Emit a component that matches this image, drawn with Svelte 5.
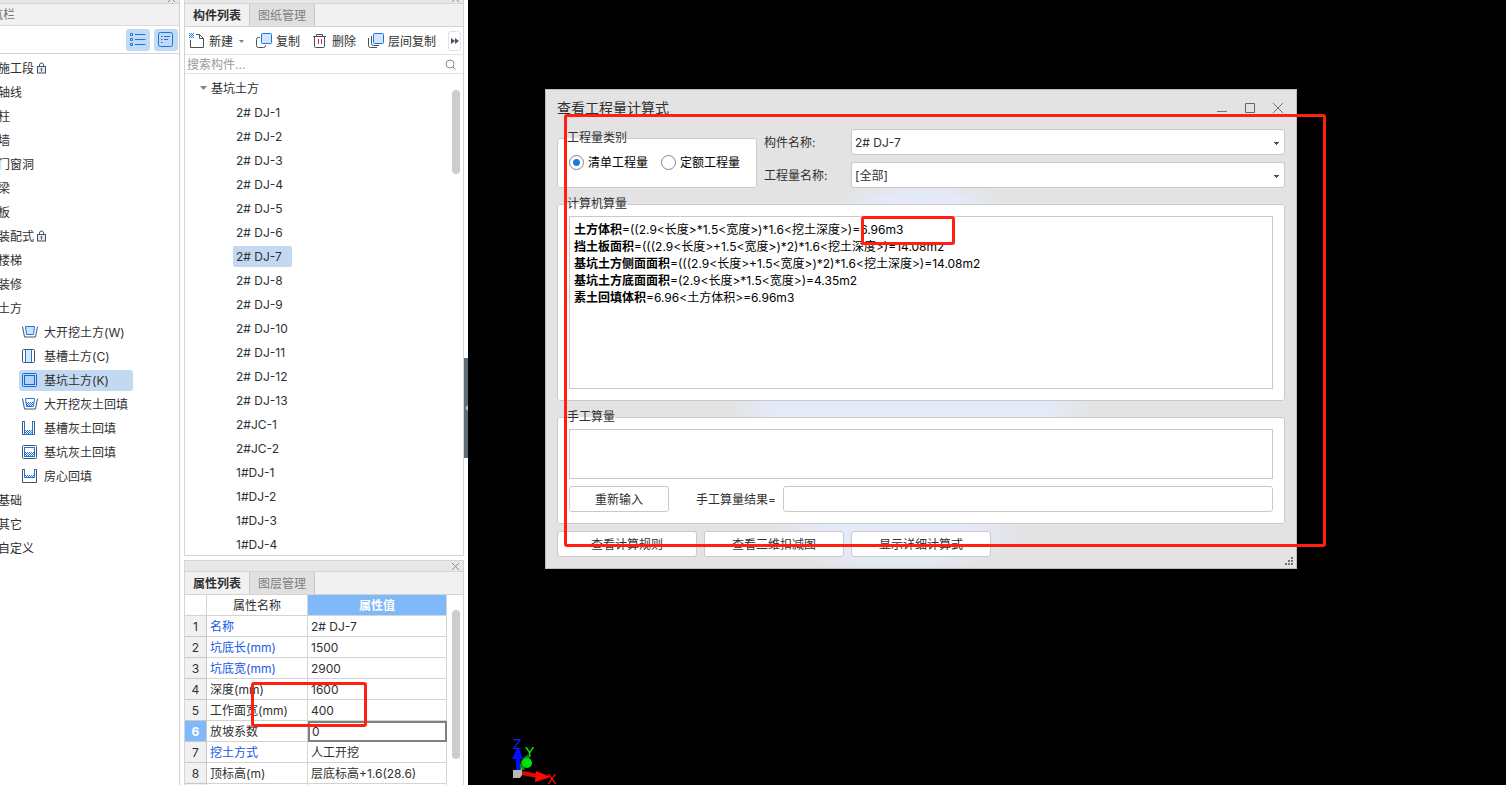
<script lang="ts">
	type NavItem = { label: string; locked?: boolean };

	const navTop: NavItem[] = [
		{ label: '施工段', locked: true },
		{ label: '轴线' },
		{ label: '柱' },
		{ label: '墙' },
		{ label: '门窗洞' },
		{ label: '梁' },
		{ label: '板' },
		{ label: '装配式', locked: true },
		{ label: '楼梯' },
		{ label: '装修' },
		{ label: '土方' }
	];
	const navBottom: NavItem[] = [{ label: '基础' }, { label: '其它' }, { label: '自定义' }];

	const earthwork = [
		{ icon: 'open', label: '大开挖土方(W)' },
		{ icon: 'trench', label: '基槽土方(C)' },
		{ icon: 'pit', label: '基坑土方(K)' },
		{ icon: 'openFill', label: '大开挖灰土回填' },
		{ icon: 'trenchFill', label: '基槽灰土回填' },
		{ icon: 'pitFill', label: '基坑灰土回填' },
		{ icon: 'room', label: '房心回填' }
	];

	const components = [
		...Array.from({ length: 13 }, (_, i) => `2# DJ-${i + 1}`),
		'2#JC-1',
		'2#JC-2',
		...Array.from({ length: 4 }, (_, i) => `1#DJ-${i + 1}`)
	];

	const properties = [
		{ name: '名称', value: '2# DJ-7', key: true },
		{ name: '坑底长(mm)', value: '1500', key: true },
		{ name: '坑底宽(mm)', value: '2900', key: true },
		{ name: '深度(mm)', value: '1600' },
		{ name: '工作面宽(mm)', value: '400' },
		{ name: '放坡系数', value: '0' },
		{ name: '挖土方式', value: '人工开挖', key: true },
		{ name: '顶标高(m)', value: '层底标高+1.6(28.6)' }
	];

	const formulas = [
		{ name: '土方体积', expr: '=((2.9<长度>*1.5<宽度>)*1.6<挖土深度>)=6.96m3' },
		{ name: '挡土板面积', expr: '=(((2.9<长度>+1.5<宽度>)*2)*1.6<挖土深度>)=14.08m2' },
		{ name: '基坑土方侧面面积', expr: '=(((2.9<长度>+1.5<宽度>)*2)*1.6<挖土深度>)=14.08m2' },
		{ name: '基坑土方底面面积', expr: '=(2.9<长度>*1.5<宽度>)=4.35m2' },
		{ name: '素土回填体积', expr: '=6.96<土方体积>=6.96m3' }
	];

	let activeNav = $state('基坑土方(K)');
	let activeComponent = $state('2# DJ-7');
	let activeRow = $state(5);
	let category = $state('bill');
</script>

{#snippet closeMark()}
	<svg width="9" height="9" viewBox="0 0 9 9" fill="none" stroke="#8c8c8c" aria-hidden="true">
		<path d="M1 1l7 7M8 1l-7 7" />
	</svg>
{/snippet}

{#snippet navRow(item: NavItem)}
	<li>
		<button class="nav-row">
			{item.label}
			{#if item.locked}
				<svg width="11" height="12" viewBox="0 0 11 12" fill="none" stroke="#4a5064" aria-hidden="true">
					<rect x="1.5" y="4.5" width="8" height="6.5" fill="#e3e8f2" />
					<path d="M3.5 4.5V3q0-2 2-2t2 2v1.500M5.500 7.500v2" />
					<circle cx="5.500" cy="7" r=".6" />
				</svg>
			{/if}
		</button>
	</li>
{/snippet}

{#snippet earthIcon(name: string)}
	<svg width="16" height="16" viewBox="0 0 16 16" fill="none" aria-hidden="true">
		{#if name === 'open' || name === 'openFill'}
			<path d="M.5 2.500l2 10.500h11l2-10.500" stroke="#4a5064" />
			<path d="M3.500 2.500h9l-1 8h-7z" stroke="#1a73e8" fill={name === 'open' ? '#cfe2fb' : '#fff'} />
		{:else if name === 'trench'}
			<path d="M4 1h5v14H4z" fill="#dbe9fc" />
			<rect x=".5" y="1.500" width="12" height="13" rx="1" stroke="#4a5064" />
			<path d="M3.500 1v14M9.500 1v14" stroke="#1a73e8" />
		{:else if name === 'trenchFill'}
			<path d="M3 1.500H.5v13H3M10 1.500h2.500v13H10" stroke="#4a5064" />
			<path d="M2.500 1v13.500h8V1" stroke="#1a73e8" />
		{:else if name === 'pit'}
			<rect x=".5" y="1.500" width="14" height="13" rx="1" stroke="#1268dc" />
			<rect x="2.500" y="3.500" width="10" height="9" stroke="#1268dc" fill="#b4d3f6" />
		{:else if name === 'pitFill'}
			<rect x=".5" y="1.500" width="14" height="13" rx="1" stroke="#4a5064" />
			<rect x="2.500" y="3.500" width="10" height="9" stroke="#1a73e8" />
		{:else}
			<path d="M2.500 1.500h-2v13h14v-13h-2" stroke="#4a5064" />
			<path d="M2.500 1v8.500h10V1" stroke="#1a73e8" />
		{/if}
		{#if name === 'openFill'}
			<path d="M4 6.500h8M4 8.500h8" stroke="#1a73e8" stroke-dasharray="1 1" />
			<path d="M5 7.500h7M5 9.500h6" stroke="#1a73e8" stroke-dasharray="1 1" />
		{:else if name === 'trenchFill'}
			<path d="M3 10.500h7M3 12.500h7" stroke="#1a73e8" stroke-dasharray="1 1" />
			<path d="M4 11.500h6M4 13.500h6" stroke="#1a73e8" stroke-dasharray="1 1" />
		{:else if name === 'pitFill'}
			<path d="M3 8.500h9M3 10.500h9" stroke="#1a73e8" stroke-dasharray="1 1" />
			<path d="M4 9.500h8M4 11.500h8" stroke="#1a73e8" stroke-dasharray="1 1" />
		{:else if name === 'room'}
			<path d="M3 7.500h9" stroke="#1a73e8" stroke-dasharray="1 1" />
			<path d="M4 8.500h8" stroke="#1a73e8" stroke-dasharray="1 1" />
		{/if}
	</svg>
{/snippet}

<div class="workspace">
	<nav class="nav-panel">
		<div class="strip clipped">{@render closeMark()}</div>
		<div class="nav-title">航栏</div>
		<div class="nav-tools">
			<button aria-label="列表">
				<svg width="16" height="16" viewBox="0 0 16 16" fill="none" stroke="#1a73e8" aria-hidden="true">
					<path d="M5 2.500h10.500M5 7.500h10.500M5 12.500h10.500" />
					<path d="M.5 1.500h2v2h-2zM.5 6.500h2v2h-2zM.5 11.500h2v2h-2z" />
				</svg>
			</button>
			<button aria-label="详情">
				<svg width="16" height="16" viewBox="0 0 16 16" fill="none" stroke="#1a73e8" aria-hidden="true">
					<rect x=".5" y=".5" width="14" height="14" rx="2" />
					<path d="M3 4.500h1.500M6 4.500h6M3 7.500h1.500M6 7.500h4M3 10.500h1.500" />
				</svg>
			</button>
		</div>
		<ul class="nav-list">
			{#each navTop as item}
				{@render navRow(item)}
			{/each}
			<li>
				<ul class="sub-list">
					{#each earthwork as item}
						<li>
							<button
								class="sub-row"
								class:selected={activeNav === item.label}
								onclick={() => (activeNav = item.label)}
							>
								{@render earthIcon(item.icon)}
								{item.label}
							</button>
						</li>
					{/each}
				</ul>
			</li>
			{#each navBottom as item}
				{@render navRow(item)}
			{/each}
		</ul>
	</nav>

	<div class="side">
		<section class="panel">
			<div class="strip clipped">{@render closeMark()}</div>
			<div class="tabs">
				<button class="active">构件列表</button>
				<button>图纸管理</button>
			</div>
			<div class="toolbar">
				<button>
					<svg width="16" height="16" viewBox="0 0 16 16" fill="none" aria-hidden="true">
						<path d="M1.500 7v7.500h13V5.500l-4-4H7M10.500 1.500v4h4" stroke="#4a5064" />
						<path d="M0 .5h5M0 2.500h5M0 4.500h5" stroke="#1a73e8" stroke-dasharray="1 1" />
						<path d="M1 1.500h4M1 3.500h4" stroke="#1a73e8" stroke-dasharray="1 1" />
					</svg>
					新建
					<svg class="drop" width="5" height="3" viewBox="0 0 5 3" aria-hidden="true"><path d="M0 0h5L2.500 3z" fill="#808080" /></svg>
				</button>
				<button>
					<svg width="16" height="16" viewBox="0 0 16 16" fill="none" aria-hidden="true">
						<path d="M4 4.500H2.500q-2 0-2 2v6q0 2 2 2h5q2 0 2-2V12" stroke="#4a5064" />
						<rect x="5.500" y=".5" width="10" height="10" rx="1" stroke="#1a73e8" fill="#d5e5fb" />
					</svg>
					复制
				</button>
				<button>
					<svg width="16" height="16" viewBox="0 0 16 16" fill="none" aria-hidden="true">
						<path d="M1 3.500h13M4.500 3.500v-2h6v2M2.500 3.500v10q0 1 1 1h8q1 0 1-1v-10" stroke="#4a5064" />
						<path d="M6.500 6v5M9.500 6v5" stroke="#e0202b" />
					</svg>
					删除
				</button>
				<button>
					<svg width="16" height="16" viewBox="0 0 16 16" fill="none" aria-hidden="true">
						<path d="M.5 5v7.500q0 2 2 2H9M3.500 3v7.500q0 2 2 2H11" stroke="#4a5064" />
						<rect x="5.500" y=".5" width="10" height="10" rx="1" stroke="#1a73e8" fill="#d5e5fb" />
					</svg>
					层间复制
				</button>
				<button class="more" aria-label="更多">
					<svg width="8" height="6" viewBox="0 0 8 6" aria-hidden="true"><path d="M0 0l4 3-4 3zM4 0l4 3-4 3z" fill="#4a5064" /></svg>
				</button>
			</div>
			<div class="search">
				<input type="text" aria-label="搜索构件" placeholder="搜索构件..." />
				<svg width="11" height="11" viewBox="0 0 11 11" fill="none" stroke="#8c8c8c" aria-hidden="true">
					<circle cx="5" cy="5" r="4" />
					<path d="M8 8l2.500 2.500" />
				</svg>
			</div>
			<div class="tree">
				<div class="tree-body">
					<div class="tree-root">
						<svg width="7" height="4" viewBox="0 0 7 4" aria-hidden="true"><path d="M0 0h7L3.500 4z" fill="#808080" /></svg>
						基坑土方
					</div>
					<ul>
						{#each components as name}
							<li>
								<button class:selected={activeComponent === name} onclick={() => (activeComponent = name)}>
									{name}
								</button>
							</li>
						{/each}
					</ul>
				</div>
				<div class="track"><div class="thumb short"></div></div>
			</div>
		</section>

		<section class="panel props">
			<div class="strip">{@render closeMark()}</div>
			<div class="tabs">
				<button class="active">属性列表</button>
				<button>图层管理</button>
			</div>
			<div class="props-body">
				<table>
					<thead>
						<tr><th class="index"></th><th class="name">属性名称</th><th class="value">属性值</th></tr>
					</thead>
					<tbody>
						{#each properties as row, i}
							<tr class:current={activeRow === i} onclick={() => (activeRow = i)}>
								<th class="index">{i + 1}</th>
								<td class:key={row.key}>{row.name}</td>
								<td>
									{#if activeRow === i}
										<input type="text" aria-label={row.name} value={row.value} />
									{:else}
										{row.value}
									{/if}
								</td>
							</tr>
						{/each}
						<tr><th class="index"></th><td></td><td></td></tr>
					</tbody>
				</table>
				<div class="track"><div class="thumb long"></div></div>
			</div>
		</section>
	</div>

	<div class="gutter">
		<button aria-label="收起">
			<svg width="3" height="6" viewBox="0 0 3 6" aria-hidden="true"><path d="M3 0v6L0 3z" fill="#b4bcc4" /></svg>
		</button>
	</div>

	<main class="canvas">
		<svg class="axes" width="50" height="50" viewBox="0 0 50 50" aria-hidden="true">
			<path d="M12 35q0-10 7-13" stroke="#0a8a14" stroke-width="5" fill="none" />
			<circle cx="17" cy="28" r="5" fill="#00e010" />
			<path d="M8 39V22" stroke="#0010f0" stroke-width="4" />
			<path d="M2 24l6-13 5 13z" fill="#0010ff" />
			<path d="M12 38l16 3" stroke="#e00808" stroke-width="4" />
			<path d="M26 36l15 6-16 5z" fill="#ff0a00" />
			<path d="M3 35h8l1-3v8l-2 3H3z" fill="#b8b8b8" />
			<text x="3" y="14" fill="#1020ff">Z</text>
			<text x="15" y="22" fill="#00ff10">Y</text>
			<text x="37" y="49" fill="#ff1010">X</text>
		</svg>

		<div class="dialog" role="dialog" aria-labelledby="dialog-title">
			<header>
				<h1 id="dialog-title">查看工程量计算式</h1>
				<div class="window-buttons">
					<button aria-label="最小化">
						<svg width="12" height="12" viewBox="0 0 12 12" fill="none" stroke="#777" aria-hidden="true"><path d="M1 9.500h10" /></svg>
					</button>
					<button aria-label="最大化">
						<svg width="12" height="12" viewBox="0 0 12 12" fill="none" stroke="#666" aria-hidden="true"><path d="M1.500 1.500h9v9h-9z" /></svg>
					</button>
					<button aria-label="关闭">
						<svg width="12" height="12" viewBox="0 0 12 12" fill="none" stroke="#777" aria-hidden="true"><path d="M1 1l10 10M11 1L1 11" /></svg>
					</button>
				</div>
			</header>

			<div class="filters">
				<fieldset>
					<legend>工程量类别</legend>
					<div class="radios">
						<label><input type="radio" name="category" value="bill" bind:group={category} />清单工程量</label>
						<label><input type="radio" name="category" value="quota" bind:group={category} />定额工程量</label>
					</div>
				</fieldset>
				<div class="fields">
					<label for="component-name">构件名称:</label>
					<select id="component-name"><option>2# DJ-7</option></select>
					<label for="quantity-name">工程量名称:</label>
					<select id="quantity-name"><option>[全部]</option></select>
				</div>
			</div>

			<fieldset class="group">
				<legend>计算机算量</legend>
				<div class="formulas">
					{#each formulas as formula}
						<p><b>{formula.name}</b>{formula.expr}</p>
					{/each}
				</div>
			</fieldset>

			<fieldset class="group">
				<legend>手工算量</legend>
				<textarea aria-label="手工算量"></textarea>
				<div class="manual">
					<button class="btn">重新输入</button>
					<label for="manual-result">手工算量结果=</label>
					<input id="manual-result" type="text" />
				</div>
			</fieldset>

			<div class="actions">
				<button class="btn">查看计算规则</button>
				<button class="btn">查看三维扣减图</button>
				<button class="btn">显示详细计算式</button>
			</div>
			<svg class="grip" width="8" height="8" viewBox="0 0 8 8" fill="#6e737a" aria-hidden="true">
				<path d="M6 0h2v2H6zM3 3h2v2H3zM6 3h2v2H6zM0 6h2v2H0zM3 6h2v2H3zM6 6h2v2H6z" />
			</svg>
		</div>
	</main>

	<div class="mark mark-dialog"></div>
	<div class="mark mark-volume"></div>
	<div class="mark mark-depth"></div>
</div>

<style>
	:global(body) {
		background: #fff;
	}

	.workspace {
		position: relative;
		display: flex;
		height: 100vh;
		overflow: hidden;
		color: #303030;
		font: 12px/17px Inter, 'Noto Sans CJK SC', sans-serif;
	}

	.workspace :is(*, *::before, *::after) {
		box-sizing: border-box;
	}

	button,
	input,
	select,
	textarea {
		margin: 0;
		padding: 0;
		border: 0;
		background: none;
		color: inherit;
		font: inherit;
		outline: none;
		white-space: nowrap;
	}

	ul {
		margin: 0;
		padding: 0;
		list-style: none;
	}

	svg {
		display: block;
		flex: none;
	}

	.strip {
		display: flex;
		flex: none;
		align-items: center;
		justify-content: flex-end;
		height: 11px;
		padding-right: 3px;
		border-bottom: 1px solid #d4d4d4;
		background: #e7e7e7;
	}

	.strip.clipped {
		align-items: flex-end;
		height: 4px;
		overflow: hidden;
	}

	/* navigation */
	.nav-panel {
		flex: none;
		width: 180px;
		border-right: 1px solid #d0d0d0;
		overflow: hidden;
	}

	.nav-title {
		height: 22px;
		margin-left: -9px;
		border-bottom: 1px solid #dcdcdc;
		background: #f1f1f1;
		color: #707070;
		line-height: 21px;
	}

	.nav-tools {
		display: flex;
		align-items: center;
		justify-content: flex-end;
		gap: 4px;
		height: 28px;
		padding-right: 1px;
		border-bottom: 1px solid #d4d4d4;
	}

	.nav-tools button {
		display: grid;
		place-items: center;
		width: 24px;
		height: 22px;
		border-radius: 3px;
		background: #c2daf3;
	}

	.nav-list {
		margin-left: -2px;
		padding-top: 2px;
	}

	.nav-row {
		display: flex;
		align-items: center;
		gap: 2px;
		height: 24px;
	}

	.sub-list {
		padding-left: 21px;
	}

	.sub-list li {
		display: flex;
		align-items: center;
		height: 24px;
	}

	.sub-row {
		display: flex;
		align-items: center;
		gap: 6px;
		height: 21px;
		padding: 0 4px 0 3px;
		border-radius: 3px;
	}

	.sub-row.selected {
		padding-right: 24px;
		background: #c2d9f1;
	}

	/* component list and properties */
	.side {
		display: flex;
		flex: none;
		flex-direction: column;
		gap: 4px;
		width: 280px;
		margin-left: 4px;
	}

	.panel {
		flex: none;
		border: solid #d4d4d4;
		border-width: 0 1px 1px;
	}

	.props {
		flex: 1;
		min-height: 0;
		border-width: 1px 1px 0;
		overflow: hidden;
	}

	.tabs {
		display: flex;
		height: 23px;
		border-bottom: 1px solid #d4d4d4;
		background: #f1f1f1;
	}

	.tabs button {
		width: 65px;
		border-right: 1px solid #c6c9cf;
		background: #e0e0e0;
		color: #808080;
	}

	.tabs .active {
		background: #f1f1f1;
		color: #303030;
		font-weight: bold;
	}

	.toolbar {
		display: flex;
		align-items: center;
		gap: 12px;
		height: 28px;
		padding: 1px 2px 0 4px;
		border-bottom: 1px solid #e4e4e4;
	}

	.toolbar button {
		display: flex;
		align-items: center;
		gap: 4px;
	}

	.toolbar .drop {
		margin-left: 2px;
	}

	.toolbar .more {
		justify-content: center;
		width: 13px;
		height: 20px;
		margin-left: auto;
		border: 1px solid #e2e2e2;
		border-radius: 3px;
	}

	.search {
		display: flex;
		align-items: center;
		height: 19px;
		padding: 0 7px 0 2px;
		border-bottom: 1px solid #e4e4e4;
	}

	.search input {
		flex: 1;
		min-width: 0;
	}

	.search input::placeholder {
		color: #9a9a9a;
		opacity: 1;
	}

	.tree,
	.props-body {
		display: flex;
		justify-content: space-between;
	}

	.tree {
		padding-top: 1px;
	}

	.tree-root {
		display: flex;
		align-items: center;
		gap: 4px;
		height: 24px;
		padding: 2px 0 0 15px;
	}

	.tree-body li {
		display: flex;
		align-items: center;
		height: 24px;
		padding: 2px 0 0 48px;
	}

	.tree-body li button {
		height: 21px;
		padding: 0 3px;
		border-radius: 2px;
	}

	.tree-body li .selected {
		padding-right: 10px;
		background: #c2d9f1;
	}

	.track {
		flex: none;
		width: 11px;
		padding-top: 15px;
	}

	.thumb {
		width: 8px;
		border-radius: 4px;
		background: #cdcdcd;
	}

	.short {
		height: 84px;
	}

	.long {
		height: 149px;
	}

	table {
		width: 262px;
		border-spacing: 0;
		table-layout: fixed;
	}

	th,
	td {
		height: 21px;
		padding: 2px 3px 0;
		border: solid #d4d4d4;
		border-width: 0 1px 1px 0;
		line-height: 18px;
		text-align: left;
		white-space: nowrap;
	}

	th {
		padding: 2px 0 0;
		font-weight: normal;
		text-align: center;
	}

	.index {
		width: 22px;
	}

	.name {
		width: 101px;
	}

	tbody .index {
		border-color: #c8c8c8;
		background: #f1f1f1;
	}

	.value {
		background: #80b9f9;
		color: #fff;
		font-weight: bold;
	}

	.key {
		color: #1558e8;
	}

	.current .index {
		background: #80b9f9;
		color: #fff;
		font-weight: bold;
	}

	.current td:last-child {
		padding: 0;
		border: 0;
	}

	.current input {
		display: block;
		width: 100%;
		height: 21px;
		padding: 0 2px;
		border: 2px solid #808080;
	}

	/* splitter between panels and drawing area */
	.gutter {
		display: flex;
		flex: none;
		align-items: center;
		width: 4px;
		padding-top: 31px;
	}

	.gutter button {
		display: flex;
		align-items: center;
		justify-content: flex-end;
		width: 4px;
		height: 100px;
		background: #5f6c78;
	}

	/* drawing area */
	.canvas {
		position: relative;
		flex: 1;
		min-width: 0;
		background: #000;
	}

	.axes {
		position: absolute;
		bottom: 0;
		left: 42px;
		font: 14px 'Liberation Sans', sans-serif;
	}

	.dialog {
		position: absolute;
		top: 89px;
		left: 77px;
		width: 752px;
		padding: 0 11px 11px;
		border: 1px solid #bcbebf;
		background:
			radial-gradient(ellipse 90px 20px at 375px 112px, #e4eaf8 40%, transparent),
			radial-gradient(ellipse 185px 50px at 364px 322px, #e4eaf8 75%, transparent),
			radial-gradient(ellipse 130px 40px at 350px 444px, #e4eaf8 60%, transparent),
			#e3e3e3;
	}

	header {
		display: flex;
		align-items: center;
		justify-content: space-between;
		height: 39px;
		padding: 0 1px 4px 0;
	}

	h1 {
		margin: 0;
		font-size: 14px;
		font-weight: normal;
		line-height: 20px;
	}

	.window-buttons {
		display: flex;
		gap: 16px;
	}

	.filters {
		display: flex;
		gap: 7px;
		align-items: flex-end;
		margin-bottom: 8px;
	}

	fieldset {
		min-width: 0;
		margin: 0;
		padding: 0 9px;
		border: 1px solid #c9c9c9;
		border-radius: 3px;
		background: #fff;
	}

	legend {
		height: 17px;
		padding: 0;
		line-height: 15px;
	}

	.filters fieldset {
		flex: none;
		width: 200px;
		height: 58px;
	}

	.radios {
		display: flex;
		gap: 13px;
		padding: 7px 2px;
		color: #000;
	}

	.radios label {
		display: flex;
		align-items: center;
		gap: 4px;
		white-space: nowrap;
	}

	.radios input {
		width: 15px;
		height: 15px;
		border: 1px solid #858585;
		border-radius: 50%;
		background: #fff;
		appearance: none;
	}

	.radios input:checked {
		background: radial-gradient(circle, #1b78dd 3px, #fff 4px);
	}

	.fields {
		display: grid;
		flex: 1;
		grid-template-columns: 87px 1fr;
		gap: 7px 0;
		align-items: center;
	}

	select {
		height: 26px;
		padding: 0 3px;
		border: 1px solid #c9c9c9;
		border-radius: 3px;
		background:
			linear-gradient(#4a5064, #4a5064) right 5px top 12px / 5px 1px no-repeat,
			linear-gradient(#4a5064, #4a5064) right 6px top 13px / 3px 1px no-repeat,
			linear-gradient(#4a5064, #4a5064) right 7px top 14px / 1px 1px no-repeat,
			#fff;
		appearance: none;
	}

	.group {
		padding: 3px 11px 11px;
	}

	.group legend {
		margin-left: -2px;
	}

	.group + .group {
		margin-top: 8px;
	}

	.formulas {
		height: 173px;
		padding: 4px;
		border: 1px solid #c9c9c9;
		color: #000;
		overflow: hidden;
	}

	.formulas p {
		margin: 0;
		white-space: nowrap;
	}

	textarea {
		display: block;
		width: 100%;
		height: 50px;
		border: 1px solid #c9c9c9;
		resize: none;
	}

	.manual {
		display: flex;
		align-items: center;
		margin-top: 7px;
	}

	.manual label {
		margin: 0 7px 0 27px;
	}

	.manual input {
		flex: 1;
		min-width: 0;
		height: 26px;
		border: 1px solid #c9c9c9;
		border-radius: 3px;
	}

	.btn {
		width: 140px;
		height: 26px;
		border: 1px solid #c9c9c9;
		border-radius: 3px;
		background: #fff;
	}

	.manual .btn {
		width: 100px;
	}

	.actions {
		display: flex;
		gap: 7px;
		margin-top: 7px;
	}

	.grip {
		position: absolute;
		right: 3px;
		bottom: 3px;
	}

	/* review marks laid over the whole workspace */
	.mark {
		position: absolute;
		border: 3px solid #ff2010;
		border-radius: 3px;
		pointer-events: none;
	}

	.mark-dialog {
		top: 114px;
		left: 564px;
		width: 762px;
		height: 433px;
	}

	.mark-volume {
		top: 216px;
		left: 861px;
		width: 94px;
		height: 29px;
	}

	.mark-depth {
		top: 682px;
		left: 251px;
		width: 116px;
		height: 45px;
	}
</style>
